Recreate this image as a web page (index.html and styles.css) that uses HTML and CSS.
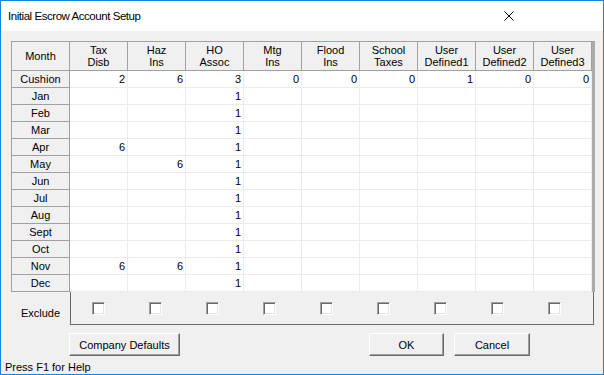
FILE: index.html
```html
<!DOCTYPE html>
<html lang="en">
<head>
    <meta charset="UTF-8">
    <title>Initial Escrow Account Setup</title>
    <link rel="stylesheet" href="styles.css">
</head>
<body>
    <div class="window">
        <div class="titlebar">
            <span class="title">Initial Escrow Account Setup</span>
            <svg class="close" width="10" height="10" viewBox="0 0 10 10">
                <path d="M0.5 0.5 L9.5 9.5 M9.5 0.5 L0.5 9.5" stroke="#000" stroke-width="1" fill="none"/>
            </svg>
        </div>
        <div class="content">
            <div class="grid">
                <div class="head">Month</div>
                <div class="head">Tax<br>Disb</div>
                <div class="head">Haz<br>Ins</div>
                <div class="head">HO<br>Assoc</div>
                <div class="head">Mtg<br>Ins</div>
                <div class="head">Flood<br>Ins</div>
                <div class="head">School<br>Taxes</div>
                <div class="head">User<br>Defined1</div>
                <div class="head">User<br>Defined2</div>
                <div class="head">User<br>Defined3</div>

                <div class="month">Cushion</div>
                <div class="cell">2</div><div class="cell">6</div><div class="cell">3</div><div class="cell">0</div><div class="cell">0</div><div class="cell">0</div><div class="cell">1</div><div class="cell">0</div><div class="cell">0</div>

                <div class="month">Jan</div>
                <div class="cell"></div><div class="cell"></div><div class="cell">1</div><div class="cell"></div><div class="cell"></div><div class="cell"></div><div class="cell"></div><div class="cell"></div><div class="cell"></div>
                <div class="month">Feb</div>
                <div class="cell"></div><div class="cell"></div><div class="cell">1</div><div class="cell"></div><div class="cell"></div><div class="cell"></div><div class="cell"></div><div class="cell"></div><div class="cell"></div>
                <div class="month">Mar</div>
                <div class="cell"></div><div class="cell"></div><div class="cell">1</div><div class="cell"></div><div class="cell"></div><div class="cell"></div><div class="cell"></div><div class="cell"></div><div class="cell"></div>
                <div class="month">Apr</div>
                <div class="cell">6</div><div class="cell"></div><div class="cell">1</div><div class="cell"></div><div class="cell"></div><div class="cell"></div><div class="cell"></div><div class="cell"></div><div class="cell"></div>
                <div class="month">May</div>
                <div class="cell"></div><div class="cell">6</div><div class="cell">1</div><div class="cell"></div><div class="cell"></div><div class="cell"></div><div class="cell"></div><div class="cell"></div><div class="cell"></div>
                <div class="month">Jun</div>
                <div class="cell"></div><div class="cell"></div><div class="cell">1</div><div class="cell"></div><div class="cell"></div><div class="cell"></div><div class="cell"></div><div class="cell"></div><div class="cell"></div>
                <div class="month">Jul</div>
                <div class="cell"></div><div class="cell"></div><div class="cell">1</div><div class="cell"></div><div class="cell"></div><div class="cell"></div><div class="cell"></div><div class="cell"></div><div class="cell"></div>
                <div class="month">Aug</div>
                <div class="cell"></div><div class="cell"></div><div class="cell">1</div><div class="cell"></div><div class="cell"></div><div class="cell"></div><div class="cell"></div><div class="cell"></div><div class="cell"></div>
                <div class="month">Sept</div>
                <div class="cell"></div><div class="cell"></div><div class="cell">1</div><div class="cell"></div><div class="cell"></div><div class="cell"></div><div class="cell"></div><div class="cell"></div><div class="cell"></div>
                <div class="month">Oct</div>
                <div class="cell"></div><div class="cell"></div><div class="cell">1</div><div class="cell"></div><div class="cell"></div><div class="cell"></div><div class="cell"></div><div class="cell"></div><div class="cell"></div>
                <div class="month">Nov</div>
                <div class="cell">6</div><div class="cell">6</div><div class="cell">1</div><div class="cell"></div><div class="cell"></div><div class="cell"></div><div class="cell"></div><div class="cell"></div><div class="cell"></div>
                <div class="month">Dec</div>
                <div class="cell"></div><div class="cell"></div><div class="cell">1</div><div class="cell"></div><div class="cell"></div><div class="cell"></div><div class="cell"></div><div class="cell"></div><div class="cell"></div>
            </div>

            <div class="exclude-row">
                <div class="exclude-label">Exclude</div>
                <div class="exclude-panel">
                    <span class="checkbox"></span>
                    <span class="checkbox"></span>
                    <span class="checkbox"></span>
                    <span class="checkbox"></span>
                    <span class="checkbox"></span>
                    <span class="checkbox"></span>
                    <span class="checkbox"></span>
                    <span class="checkbox"></span>
                    <span class="checkbox"></span>
                </div>
            </div>

            <div class="buttons">
                <button class="btn btn-defaults">Company Defaults</button>
                <button class="btn btn-ok">OK</button>
                <button class="btn btn-cancel">Cancel</button>
            </div>
        </div>
        <div class="status">Press F1 for Help</div>
    </div>
</body>
</html>
```

FILE: styles.css
```css
/* dialog window */
body {
    margin: 0;
    padding: 0;
    font-family: 'Liberation Sans', Arial, sans-serif;
    font-size: 11px;
    color: #000;
    background-color: #f0f0f0;
}
.window {
    width: 604px;
    height: 375px;
    box-sizing: border-box;
    border: 1px solid #1883d7;
    background-color: #f0f0f0;
    display: flex;
    flex-direction: column;
}
.titlebar {
    height: 30px;
    flex-shrink: 0;
    background-color: #fff;
    display: flex;
    align-items: center;
    justify-content: space-between;
    padding: 0 89px 0 7px;
}
.title {
    font-size: 11.5px;
    letter-spacing: -0.45px;
    padding-bottom: 1px;
}
.close {
    display: block;
    margin-bottom: 1px;
}
.content {
    padding: 10px 0 0 10px;
}

/* grid */
.grid {
    display: grid;
    grid-template-columns: repeat(10, 58px);
    grid-template-rows: 29px repeat(13, 17px);
    width: fit-content;
    border-left: 1px solid #a0a0a0;
    border-top: 1px solid #a0a0a0;
    border-right: 3px solid #ababab;
}
.head, .month, .cell {
    box-sizing: border-box;
    border-right: 1px solid #a0a0a0;
    border-bottom: 1px solid #a0a0a0;
}
.head {
    background-color: #f0f0f0;
    text-align: center;
    line-height: 12px;
    display: flex;
    align-items: center;
    justify-content: center;
    padding-bottom: 1px;
}
.month {
    background-color: #f0f0f0;
    text-align: center;
    line-height: 16px;
}
.cell {
    background-color: #fff;
    border-color: #ebebeb;
    text-align: right;
    line-height: 16px;
    padding-right: 2px;
}

/* exclude checkboxes */
.exclude-row {
    display: flex;
    height: 33px;
}
.exclude-label {
    width: 59px;
    text-align: center;
    line-height: 13px;
    padding-top: 15px;
}
.exclude-panel {
    width: 524px;
    box-sizing: border-box;
    border: 1px solid #696969;
    border-top: none;
    display: flex;
    gap: 44px;
    padding: 10px 0 0 21px;
}
.checkbox {
    width: 13px;
    height: 13px;
    box-sizing: border-box;
    border-top: 1px solid #a0a0a0;
    border-left: 1px solid #a0a0a0;
    border-right: 1px solid #fff;
    border-bottom: 1px solid #fff;
    box-shadow: inset 1px 1px 0 #696969, inset -1px -1px 0 #e3e3e3;
    background-color: #fff;
}

/* buttons */
.buttons {
    display: flex;
    margin-top: 8px;
    padding-left: 58px;
}
.btn {
    height: 23px;
    box-sizing: border-box;
    background-color: #f0f0f0;
    border-top: 1px solid #fff;
    border-left: 1px solid #fff;
    border-right: 1px solid #696969;
    border-bottom: 1px solid #696969;
    box-shadow: inset -1px -1px 0 #a0a0a0;
    font-family: 'Liberation Sans', Arial, sans-serif;
    font-size: 11px;
    color: #000;
    padding: 0;
}
.btn-defaults {
    width: 111px;
}
.btn-ok {
    width: 75px;
    margin-left: 189px;
}
.btn-cancel {
    width: 76px;
    margin-left: 10px;
}

/* status line */
.status {
    margin-top: auto;
    padding-left: 4px;
    line-height: 13px;
    padding-bottom: 0;
}
```
